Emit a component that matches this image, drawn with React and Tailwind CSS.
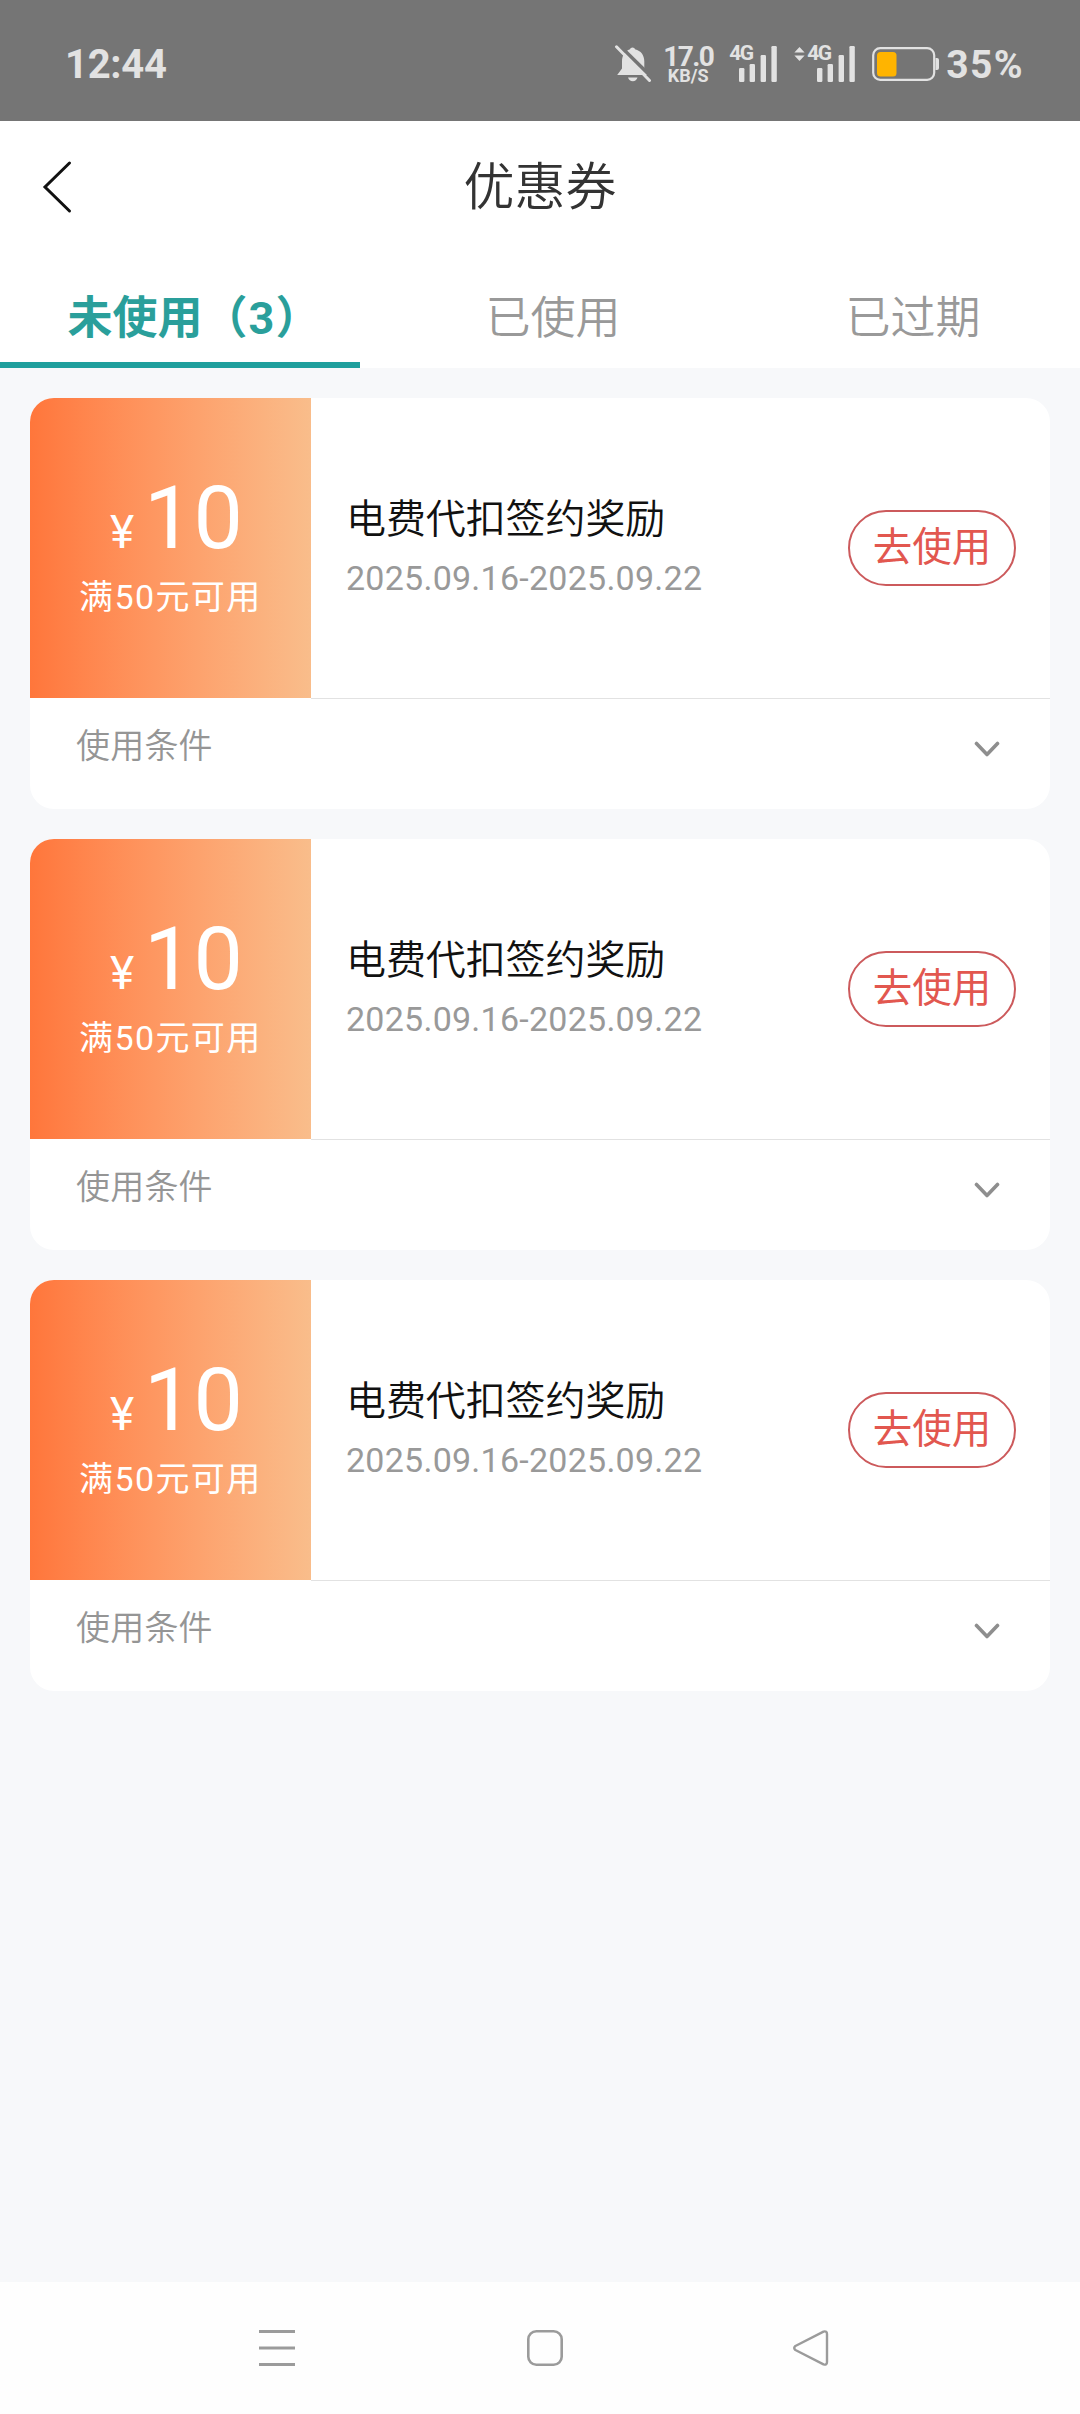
import React, { useState } from 'react';

const tabs = [
  { key: 'unused', label: '未使用', count: 3 },
  { key: 'used', label: '已使用' },
  { key: 'expired', label: '已过期' },
];

const coupons = [
  { id: 1, amount: 10, limit: '满50元可用', title: '电费代扣签约奖励', date: '2025.09.16-2025.09.22' },
  { id: 2, amount: 10, limit: '满50元可用', title: '电费代扣签约奖励', date: '2025.09.16-2025.09.22' },
  { id: 3, amount: 10, limit: '满50元可用', title: '电费代扣签约奖励', date: '2025.09.16-2025.09.22' },
];

function Signal({ arrows }) {
  return (
    <div className="relative h-[36px] w-[48px]">
      <svg className="block" width="48" height="36" viewBox="0 0 48 36" fill="#e2e2e2">
        <rect x="10" y="22" width="5.4" height="14" rx="1.2" />
        <rect x="20.6" y="18" width="5.4" height="18" rx="1.2" />
        <rect x="31.6" y="9" width="5.4" height="27" rx="1.2" />
        <rect x="42.4" y="0" width="5.4" height="36" rx="1.2" />
      </svg>
      <span className="absolute left-0 -top-[3px] text-[21px] leading-[21px] font-bold tracking-[-1.5px]">4G</span>
      {arrows && (
        <svg className="absolute -left-[13px] top-px" width="11" height="14" viewBox="0 0 11 14" fill="#e2e2e2">
          <path d="M5.5 0 L10.6 5.6 H.4 Z M5.5 14 L.4 8.4 H10.6 Z" />
        </svg>
      )}
    </div>
  );
}

function StatusBar() {
  return (
    <div className="flex h-[121px] items-center justify-between bg-[#757575] pl-[65px] pr-[56px] pb-[7px] pt-[14px] text-[#e2e2e2]">
      <span className="pt-[2px] text-[40px] leading-none font-bold tracking-[-0.3px]">12:44</span>

      <div className="flex items-center">
        {/* muted bell */}
        <svg className="mr-[10px]" width="38" height="38" viewBox="0 0 38 38">
          <path d="M18.5 2.5c1.3 0 2.2.8 2.5 1.8 6 1.4 9.3 6 9.3 12.2v7l4.5 6.5H3.2L8 23.5v-7c0-6 3-10.8 8-12.2.4-1 1.300-1.800 2.500-1.800z" fill="#e2e2e2" />
          <path d="M14 32.500h9.500c-.6 2.300-2.500 3.800-4.700 3.800s-4.200-1.500-4.800-3.800z" fill="#e2e2e2" />
          <path d="M4.500 -0.500 L39 33.500" stroke="#757575" strokeWidth="3.500" />
          <path d="M2.500 1.800 L35.500 35.500" stroke="#e2e2e2" strokeWidth="3" strokeLinecap="round" />
        </svg>

        <div className="mr-[15px] flex w-[52px] flex-col items-center">
          <span className="text-[28px] leading-[24px] font-bold tracking-[-1.6px]">17.0</span>
          <span className="text-[18px] leading-[14px] font-bold">KB/S</span>
        </div>

        <div className="mr-[30px]"><Signal /></div>
        <Signal arrows />

        {/* battery */}
        <svg className="ml-[17px] mr-[7px]" width="67" height="34" viewBox="0 0 67 34">
          <rect x="1.200" y="1.200" width="61" height="31.600" rx="7" fill="none" stroke="#e2e2e2" strokeWidth="2.200" />
          <path d="M63.500 11h1.500q2 0 2 2v8q0 2-2 2h-1.500z" fill="#e2e2e2" />
          <rect x="5" y="5" width="19.500" height="24.500" rx="3.500" fill="#ffb400" />
        </svg>
        <span className="pt-[2px] text-[39px] leading-none font-bold tracking-[1.4px]">35%</span>
      </div>
    </div>
  );
}

function CouponCard({ coupon }) {
  const [open, setOpen] = useState(false);

  return (
    <div className="overflow-hidden rounded-[24px] bg-white">
      <div className="flex h-[301px] items-start">
        <div className="h-[300px] w-[281px] bg-gradient-to-r from-[#ff763b] to-[#f9bd8b] text-white">
          <div className="flex items-baseline pl-[80px] pt-[76px] leading-[88px]">
            <span className="w-[34px] text-[46px]">¥</span>
            <span className="text-[88px]">{coupon.amount}</span>
          </div>
          <p className="-mt-[3px] pl-[49px] text-[34px] leading-[48px] tracking-[1.4px]">{coupon.limit}</p>
        </div>

        <div className="flex h-[301px] flex-1 items-center justify-between border-b border-[#e2e2e2] pl-[35px] pr-[34px]">
          <div>
            <h2 className="text-[40px] leading-[60px] font-[350] tracking-[-0.1px] text-[#111111]">{coupon.title}</h2>
            <p className="text-[34px] leading-[56px] tracking-[0.25px] text-[#999999]">{coupon.date}</p>
          </div>
          <button className="h-[76px] w-[168px] rounded-full border-2 border-[#cc5a5c] text-[39.5px] leading-[72px] text-[#e2574f]">
            去使用
          </button>
        </div>
      </div>

      <div className="flex h-[110px] items-start justify-between pl-[46px] pr-[50px] pt-[23px]" onClick={() => setOpen(!open)}>
        <span className="text-[34px] leading-[48px] font-[350] tracking-[0.2px] text-[#959595]">使用条件</span>
        <svg className="mt-[18px]" width="26" height="18" viewBox="0 0 26 18" fill="none">
          <path d="M2.500 3.500 L13 14.500 L23.500 3.500" stroke="#8e8e8e" strokeWidth="3.600" strokeLinecap="round" strokeLinejoin="round" />
        </svg>
      </div>
    </div>
  );
}

function NavBar() {
  return (
    <div className="flex h-[132px] items-center bg-[#fefefe] pl-[259px]">
      <svg width="36" height="36" viewBox="0 0 36 36" fill="none" stroke="#9b9b9b" strokeWidth="3">
        <path d="M0 1.500H36M0 18H36M0 34.500H36" />
      </svg>
      <svg className="ml-[232px]" width="36" height="36" viewBox="0 0 36 36" fill="none" stroke="#9b9b9b" strokeWidth="2.600">
        <rect x="1.300" y="1.300" width="33.400" height="33.400" rx="8" />
      </svg>
      <svg className="ml-[230px]" width="36" height="36" viewBox="0 0 36 36" fill="none" stroke="#9b9b9b" strokeWidth="2.400" strokeLinejoin="round">
        <path d="M2.400 16 L30.500 1.600 Q34 .6 34 4 V32 Q34 35.400 30.500 34.400 L2.400 20 Q0 18 2.400 16 Z" />
      </svg>
    </div>
  );
}

function App() {
  const [activeTab, setActiveTab] = useState('unused');

  return (
    <div className="flex h-[2414px] w-[1080px] flex-col bg-[#f7f8fa] font-['Roboto','Noto_Sans_CJK_SC',sans-serif]">
      <StatusBar />

      {/* title */}
      <header className="grid h-[132px] grid-cols-[120px_1fr_120px] items-center bg-white">
        <svg className="ml-[42px]" width="30" height="54" viewBox="0 0 30 54" fill="none">
          <path d="M27.500 3 L3 27 L27.500 51" stroke="#111111" strokeWidth="3" strokeLinecap="round" />
        </svg>
        <h1 className="pt-[2px] text-center text-[51px] leading-[60px] font-[350] text-[#333333]">优惠券</h1>
      </header>

      {/* tabs */}
      <div className="grid h-[115px] grid-cols-3 bg-white">
        {tabs.map(tab => (
          <button
            key={tab.key}
            onClick={() => setActiveTab(tab.key)}
            className={`border-b-[6px] pl-[26px] pt-[22px] text-[45px] leading-[87px] whitespace-nowrap
              ${activeTab === tab.key ? 'border-[#1f9f9d] font-bold text-[#2a9f9b]' : 'border-transparent font-[350] text-[#999999]'}`}
          >
            {tab.label}
            {tab.count && (
              <>
                <span>（</span>
                <span className="mx-px">{tab.count}</span>
                <span className="mr-[-2px]">）</span>
              </>
            )}
          </button>
        ))}
      </div>

      {/* coupon list */}
      <main className="flex flex-1 flex-col gap-[30px] px-[30px] pt-[30px]">
        {coupons.map(coupon => (
          <CouponCard key={coupon.id} coupon={coupon} />
        ))}
      </main>

      <NavBar />
    </div>
  );
}

export default App;
